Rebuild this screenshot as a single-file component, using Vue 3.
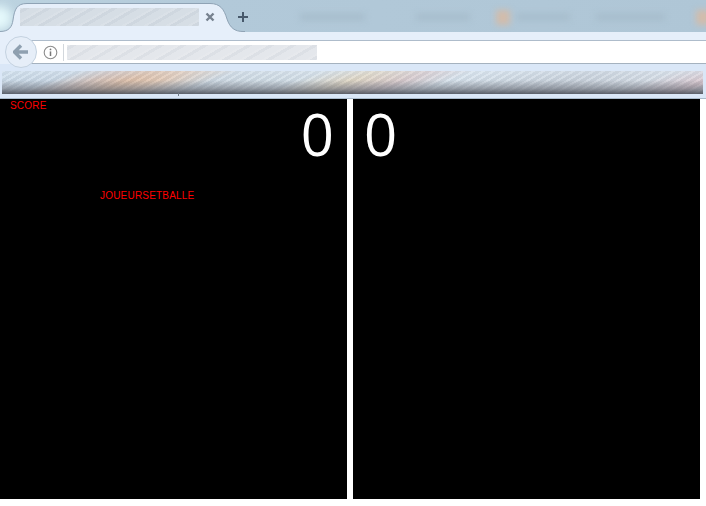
<template>
  <div class="page">
    <div class="tabstrip">
      <div class="glow"></div>
      <svg class="tabshape" width="245" height="32" viewBox="0 0 245 32">
        <path d="M0 31.5C9 31.5 12 27 13 20C14.5 9 17 3.5 27 3.5H210C220 3.5 224 9 227 19C230 28 235 31.5 243 31.5V32H0Z" fill="#e6effa" stroke="none" />
        <path d="M0 31.5C9 31.5 12 27 13 20C14.5 9 17 3.5 27 3.5H210C220 3.5 224 9 227 19C230 28 235 31.5 243 31.5H245" fill="none" stroke="#8fa3b5" stroke-width="1" />
      </svg>
      <div class="tabrow">
        <div class="tabtitle smear"></div>
        <svg class="tabclose" width="10" height="10" viewBox="0 0 10 10">
          <path d="M1.5 1.5L8.5 8.5M8.5 1.5L1.5 8.5" stroke="#76828f" stroke-width="2.4" />
        </svg>
        <svg class="tabnew" width="14" height="14" viewBox="0 0 14 14">
          <path d="M7 2V12M2 7H12" stroke="#47596b" stroke-width="2" />
        </svg>
        <div class="ghosts">
          <span class="ghost g1"></span>
          <span class="ghost g2"></span>
          <span class="dot d1"></span>
          <span class="ghost g3"></span>
          <span class="ghost g4"></span>
          <span class="dot d2"></span>
        </div>
      </div>
    </div>

    <div class="navbar">
      <div class="urlbar">
        <svg class="info" width="15" height="15" viewBox="0 0 15 15">
          <circle cx="7.5" cy="7.5" r="6.3" fill="none" stroke="#8c8c8c" stroke-width="1.1" />
          <circle cx="7.5" cy="4.4" r="0.9" fill="#777" />
          <path d="M7.5 6.4V11" stroke="#777" stroke-width="1.5" />
        </svg>
        <div class="sep"></div>
        <div class="urltext smear"></div>
      </div>
      <div class="backbtn">
        <svg width="16" height="16" viewBox="0 0 16 16">
          <path d="M8 1.5L1.5 8L8 14.5M2.5 8H15" fill="none" stroke="#8fa0b0" stroke-width="3.4" />
        </svg>
      </div>
    </div>

    <div class="bookmarks">
      <div class="bookstrip"></div>
      <div class="tick"></div>
    </div>

    <div class="game">
      <div class="panel left">
        <span class="score">SCORE</span>
        <span class="players">JOUEURSETBALLE</span>
        <span class="num">{{ scoreLeft }}</span>
      </div>
      <div class="panel right">
        <span class="num">{{ scoreRight }}</span>
      </div>
    </div>
  </div>
</template>

<script setup>
import { ref } from "vue";

const scoreLeft = ref(0);
const scoreRight = ref(0);
</script>

<style>
html,
body {
  margin: 0;
  background: #fff;
  overflow: hidden;
}
</style>

<style scoped>
.page {
  width: 706px;
  height: 506px;
  font-family: "Liberation Sans", Arial, sans-serif;
  background: #fff;
  overflow: hidden;
}

.tabstrip {
  position: relative;
  height: 32px;
  background: linear-gradient(to right, #bcd3e0 0, #b2c9d9 30%, #afc6d6 100%);
  overflow: hidden;
}

.glow {
  position: absolute;
  left: -14px;
  top: 6px;
  width: 26px;
  height: 24px;
  border-radius: 50%;
  background: #e4f8fb;
  filter: blur(5px);
}

.tabshape {
  position: absolute;
  left: 0;
  top: 0;
}

.tabrow {
  position: relative;
  display: flex;
  align-items: center;
  height: 32px;
  padding: 2px 0 0 20px;
  box-sizing: border-box;
}

.smear {
  background-color: #d3dbe3;
  background-image: repeating-linear-gradient(
    150deg,
    rgba(255, 255, 255, 0.16) 0 2px,
    rgba(170, 180, 190, 0.1) 2px 5px,
    rgba(255, 255, 255, 0.08) 5px 11px
  );
}

.tabtitle {
  flex: 0 0 179px;
  height: 18px;
}

.tabclose {
  margin-left: 6px;
  flex-shrink: 0;
}

.tabnew {
  margin-left: 21px;
  flex-shrink: 0;
}

.ghosts {
  display: flex;
  flex-shrink: 0;
  align-items: center;
  margin-left: 50px;
  filter: blur(3px);
}

.ghost {
  display: block;
  flex-shrink: 0;
  height: 6px;
  background: #a6bccb;
}

.g1 {
  width: 65px;
}

.g2 {
  width: 54px;
  margin-left: 51px;
}

.g3 {
  width: 54px;
  margin-left: 6px;
}

.g4 {
  width: 69px;
  margin-left: 26px;
}

.dot {
  display: block;
  flex-shrink: 0;
  width: 14px;
  height: 15px;
  background: #d2bcab;
}

.d1 {
  margin-left: 26px;
}

.d2 {
  margin-left: 31px;
}

.navbar {
  position: relative;
  height: 32px;
  background: #e6effa;
}

.urlbar {
  position: absolute;
  left: 21px;
  right: 0;
  top: 8px;
  height: 22px;
  display: flex;
  align-items: center;
  background: #fff;
  border-top: 1px solid #aebccb;
  border-bottom: 1px solid #a5b2bf;
  padding-left: 22px;
}

.info {
  flex-shrink: 0;
}

.sep {
  width: 1px;
  height: 17px;
  background: #d2d7dc;
  margin-left: 5px;
}

.urltext {
  width: 250px;
  height: 15px;
  margin-left: 3px;
  background-color: #e2e5ea;
}

.backbtn {
  position: absolute;
  left: 5px;
  top: 4px;
  width: 30px;
  height: 30px;
  border: 1px solid #c4d2e0;
  border-radius: 50%;
  background: #e6eef8;
  display: flex;
  align-items: center;
  justify-content: center;
  z-index: 1;
}

.bookmarks {
  position: relative;
  height: 35px;
  box-sizing: border-box;
  padding: 7px 3px 0 2px;
  background: #dae7f7;
  border-bottom: 1px solid #a9bacb;
}

.bookstrip {
  height: 23px;
  background-image:
    linear-gradient(to bottom, rgba(225, 235, 245, 0.3) 0%, rgba(190, 200, 210, 0.05) 40%, rgba(105, 110, 120, 0.55) 75%, rgba(70, 75, 85, 0.85) 100%),
    repeating-linear-gradient(150deg, rgba(255, 255, 255, 0.14) 0 2px, rgba(120, 130, 140, 0.12) 2px 5px),
    linear-gradient(
      160deg,
      #cfe0ee 0%,
      #c9d8e6 10%,
      #d3c0b8 15%,
      #e0bda3 20%,
      #e4c8b2 24%,
      #cfdbe5 31%,
      #d3dfe8 42%,
      #e2d7c2 49%,
      #d9c9cb 56%,
      #d8e4ee 62%,
      #c9d2dc 78%,
      #d5dde6 88%,
      #dcc6cd 96%,
      #d0d9e3 100%
    );
}

.tick {
  position: absolute;
  left: 178px;
  bottom: 2px;
  width: 1px;
  height: 3px;
  background: #6f7a85;
}

.game {
  display: flex;
  gap: 6px;
  width: 700px;
  height: 400px;
}

.panel {
  position: relative;
  flex: 0 0 347px;
  background: #000;
  display: flex;
  align-items: flex-start;
  box-sizing: border-box;
}

.left {
  justify-content: flex-end;
  padding-right: 13px;
}

.right {
  justify-content: flex-start;
  padding-left: 11px;
}

.num {
  color: #fff;
  font-family: "Open Sans", sans-serif;
  font-size: 58px;
  line-height: 69px;
}

.score,
.players {
  position: absolute;
  color: #f00;
  font-size: 10px;
  line-height: 12px;
  letter-spacing: 0.2px;
}

.score {
  left: 10px;
  top: 1px;
}

.players {
  left: 100px;
  top: 91px;
}
</style>
